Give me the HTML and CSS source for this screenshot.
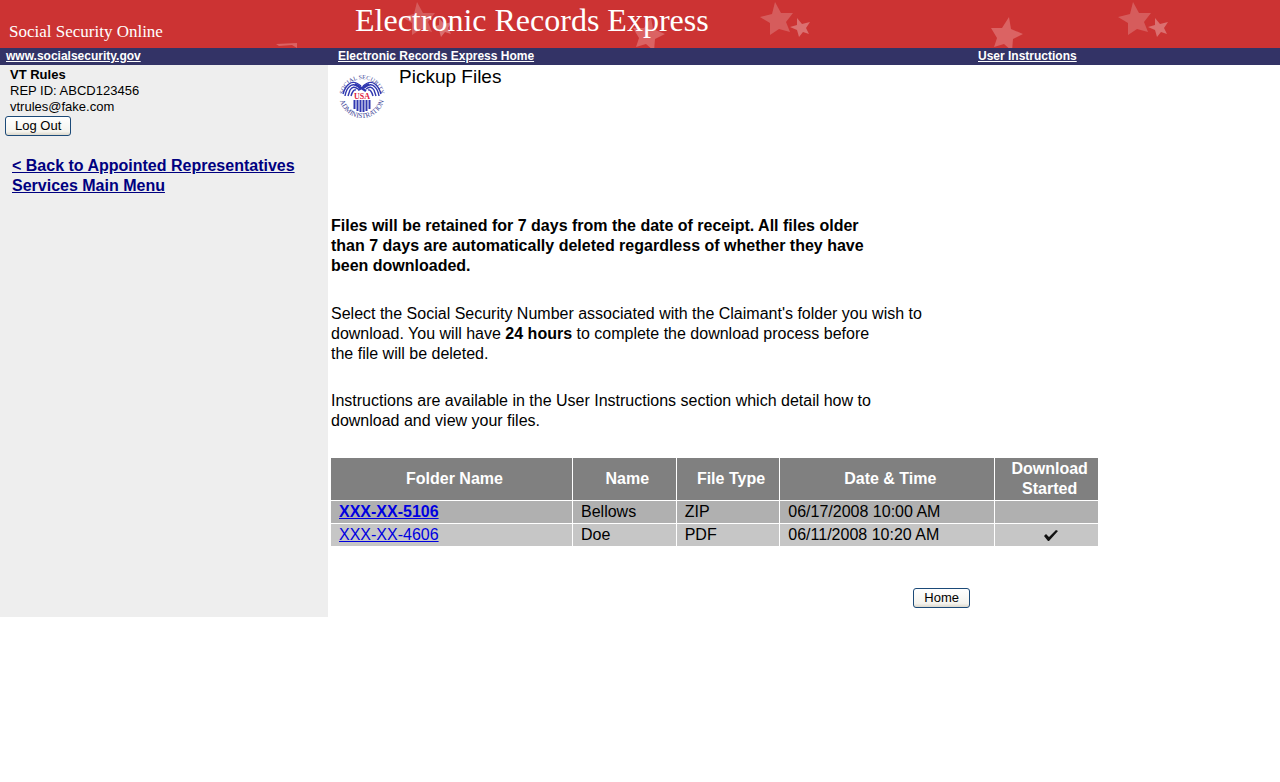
FILE: index.html
```html
<!DOCTYPE html>
<html lang="en">
<head>
    <meta charset="UTF-8">
    <meta name="viewport" content="width=device-width, initial-scale=1.0">
    <title>Electronic Records Express - Pickup Files</title>
    <link rel="stylesheet" href="styles.css">
</head>
<body>
    <header class="banner">
        <svg class="stars" width="1280" height="48" viewBox="0 0 1280 48" aria-hidden="true">
            <defs>
                <g id="pair">
                    <path fill="#d65c5c" d="M15 2 L21 13 L33 13 L26 22 L30 32 L19 29 L10 35 L10 23 L0 17 L12 14Z"/>
                    <path fill="#db7070" d="M37 18 L42 24 L50 22 L46 28 L49 34 L43 32 L39 37 L37 30 L30 27 L37 25Z"/>
                </g>
                <path id="single" fill="#db6363" d="M18 17 L20 29 L32 34 L22 39 L21 51 L13 44 L3 47 L6 38 L0 28 L11 28Z"/>
            </defs>
            <use href="#pair" x="402"/>
            <use href="#single" x="633"/>
            <use href="#pair" x="760"/>
            <use href="#single" x="991"/>
            <use href="#pair" x="1118"/>
            <path fill="#db6363" d="M276 44 L297 43 L297 48 L292 45 L279 46Z"/>
        </svg>
        <div class="site-name">Social Security Online</div>
        <div class="app-name">Electronic Records Express</div>
    </header>
    <nav class="navbar">
        <a href="#">www.socialsecurity.gov</a>
        <a href="#">Electronic Records Express Home</a>
        <a href="#">User Instructions</a>
    </nav>
    <div class="page">
        <aside class="sidebar">
            <div class="user">
                <b>VT Rules</b><br>
                REP ID: ABCD123456<br>
                vtrules@fake.com
            </div>
            <button type="button" class="logout">Log Out</button>
            <a class="back" href="#">&lt; Back to Appointed Representatives Services Main Menu</a>
        </aside>
        <main class="main">
            <div class="title">
                <svg class="seal" width="46" height="48" viewBox="0 0 46 48" role="img" aria-label="Social Security Administration">
                    <defs>
                        <path id="top" d="M4 26 A19 19 0 0 1 42 26"/>
                        <path id="bottom" d="M0 22 A23 24 0 0 0 46 22"/>
                    </defs>
                    <text class="seal-text"><textPath href="#top" startOffset="50%" text-anchor="middle">SOCIAL SECURITY</textPath></text>
                    <text class="seal-text seal-bottom"><textPath href="#bottom" startOffset="50%" text-anchor="middle">ADMINISTRATION</textPath></text>
                    <g fill="none" stroke="#3038b0" stroke-width="1.4">
                        <path d="M22 14 Q15 8 10 12 Q6 15 4 22"/>
                        <path d="M21 16 Q14 10 10 15 Q7 18 6 24"/>
                        <path d="M19 17 Q14 13 11 18 L9 24"/>
                        <path d="M17 18 Q14 17 12 24"/>
                        <path d="M24 14 Q31 8 36 12 Q40 15 42 22"/>
                        <path d="M25 16 Q32 10 36 15 Q39 18 40 24"/>
                        <path d="M27 17 Q32 13 35 18 L37 24"/>
                        <path d="M29 18 Q32 17 34 24"/>
                        <path stroke-width="2.5" d="M16 12 L27 19 M30 12 L19 18"/>
                    </g>
                    <path fill="none" stroke="#3038b0" stroke-width="2" d="M15.5 28V37 M18.5 28V39 M21.5 28V40 M24.5 28V40 M27.5 28V39 M30.5 28V37"/>
                    <text class="seal-usa" x="23" y="27" text-anchor="middle">USA</text>
                </svg>
                <h1>Pickup Files</h1>
            </div>
            <p class="notice">
                Files will be retained for 7 days from the date of receipt. All files older<br>
                than 7 days are automatically deleted regardless of whether they have<br>
                been downloaded.
            </p>
            <p>
                Select the Social Security Number associated with the Claimant's folder you wish to<br>
                download. You will have <b>24 hours</b> to complete the download process before<br>
                the file will be deleted.
            </p>
            <p>
                Instructions are available in the User Instructions section which detail how to<br>
                download and view your files.
            </p>
            <table class="files">
                <thead>
                    <tr>
                        <th class="folder">Folder Name</th>
                        <th>Name</th>
                        <th>File Type</th>
                        <th class="date">Date &amp; Time</th>
                        <th>Download Started</th>
                    </tr>
                </thead>
                <tbody>
                    <tr class="new">
                        <td><a href="#">XXX-XX-5106</a></td>
                        <td>Bellows</td>
                        <td>ZIP</td>
                        <td>06/17/2008 10:00 AM</td>
                        <td></td>
                    </tr>
                    <tr>
                        <td><a href="#">XXX-XX-4606</a></td>
                        <td>Doe</td>
                        <td>PDF</td>
                        <td>06/11/2008 10:20 AM</td>
                        <td class="check">
                            <svg width="16" height="13" viewBox="0 0 16 13" role="img" aria-label="Started">
                                <path fill="#111" d="M1 7 L3 5 L6 8 L13 1 L15 2 L6 12 L5 12Z"/>
                            </svg>
                        </td>
                    </tr>
                </tbody>
            </table>
            <div class="actions">
                <button type="button">Home</button>
            </div>
        </main>
    </div>
</body>
</html>
```
FILE: styles.css
```css
body {
    margin: 0;
    background-color: #fff;
    color: #000;
    font-family: "Liberation Sans", Arial, sans-serif;
    font-size: 16px;
    line-height: 20px;
}
.banner, .navbar, .page {
    display: grid;
    grid-template-columns: 328px 1fr;
}
.banner {
    position: relative;
    height: 48px;
    overflow: hidden;
    background-color: #cc3333;
    color: #fff;
    font-family: "Liberation Serif", Georgia, serif;
}
.stars {
    position: absolute;
    left: 0;
    top: 0;
}
.site-name, .app-name {
    position: relative;
}
.site-name {
    padding: 22px 0 0 9px;
    font-size: 17px;
}
.app-name {
    padding: 2px 0 0 27px;
    font-size: 32px;
    line-height: 36px;
}
.navbar {
    grid-template-columns: 332px 640px 1fr;
    background-color: #333366;
    font-size: 12px;
    font-weight: bold;
    line-height: 17px;
}
.navbar a {
    padding-left: 6px;
    color: #fff;
}
.sidebar {
    box-sizing: border-box;
    min-height: 552px;
    background-color: #eee;
}
.user {
    padding: 2px 0 0 10px;
    font-size: 13px;
    line-height: 16px;
}
button {
    box-sizing: border-box;
    height: 20px;
    padding: 0 9px;
    border: 1px solid #1c4a78;
    border-radius: 3px;
    background: linear-gradient(#fff, #f4f3ee 80%, #dcd8cc);
    color: #000;
    font-family: inherit;
    font-size: 13px;
    line-height: 18px;
}
.logout {
    display: block;
    margin: 1px 0 0 5px;
}
.back {
    display: block;
    margin: 20px 20px 0 12px;
    color: #000080;
    font-weight: bold;
}
.main {
    padding-left: 3px;
}
.title {
    display: flex;
    gap: 14px;
    height: 151px;
    padding-left: 8px;
}
.seal {
    margin-top: 7px;
    overflow: visible;
}
.seal-text {
    fill: #3c4296;
    font-family: "Liberation Serif", serif;
    font-size: 6px;
}
.seal-bottom {
    font-size: 7px;
}
.seal-usa {
    fill: #e02040;
    font-family: "Liberation Serif", serif;
    font-size: 8px;
    font-weight: bold;
}
h1 {
    margin: 2px 0 0;
    font-size: 19px;
    font-weight: normal;
}
p {
    margin: 0 0 27px;
}
.notice {
    margin-bottom: 28px;
    font-weight: bold;
}
.files {
    width: 768px;
    border-collapse: collapse;
    table-layout: fixed;
}
.files th {
    height: 40px;
    padding: 1px 0 1px 6px;
    background-color: #808080;
    color: #fff;
}
.files td {
    height: 20px;
    padding: 1px 0 1px 8px;
    background-color: #c6c6c6;
}
.files th, .files td {
    border: 1px solid #fff;
    border-width: 0 1px 1px 0;
}
.files .new td {
    background-color: #b0b0b0;
}
.files .folder {
    width: 235px;
}
.files .date {
    width: 208px;
}
.files a {
    color: #0000e0;
}
.files .new a {
    font-weight: bold;
}
.files .check {
    text-align: center;
}
.check svg {
    vertical-align: middle;
}
.actions {
    display: flex;
    justify-content: flex-end;
    width: 639px;
    margin-top: 41px;
}
.actions button {
    padding: 0 10px;
}
```
